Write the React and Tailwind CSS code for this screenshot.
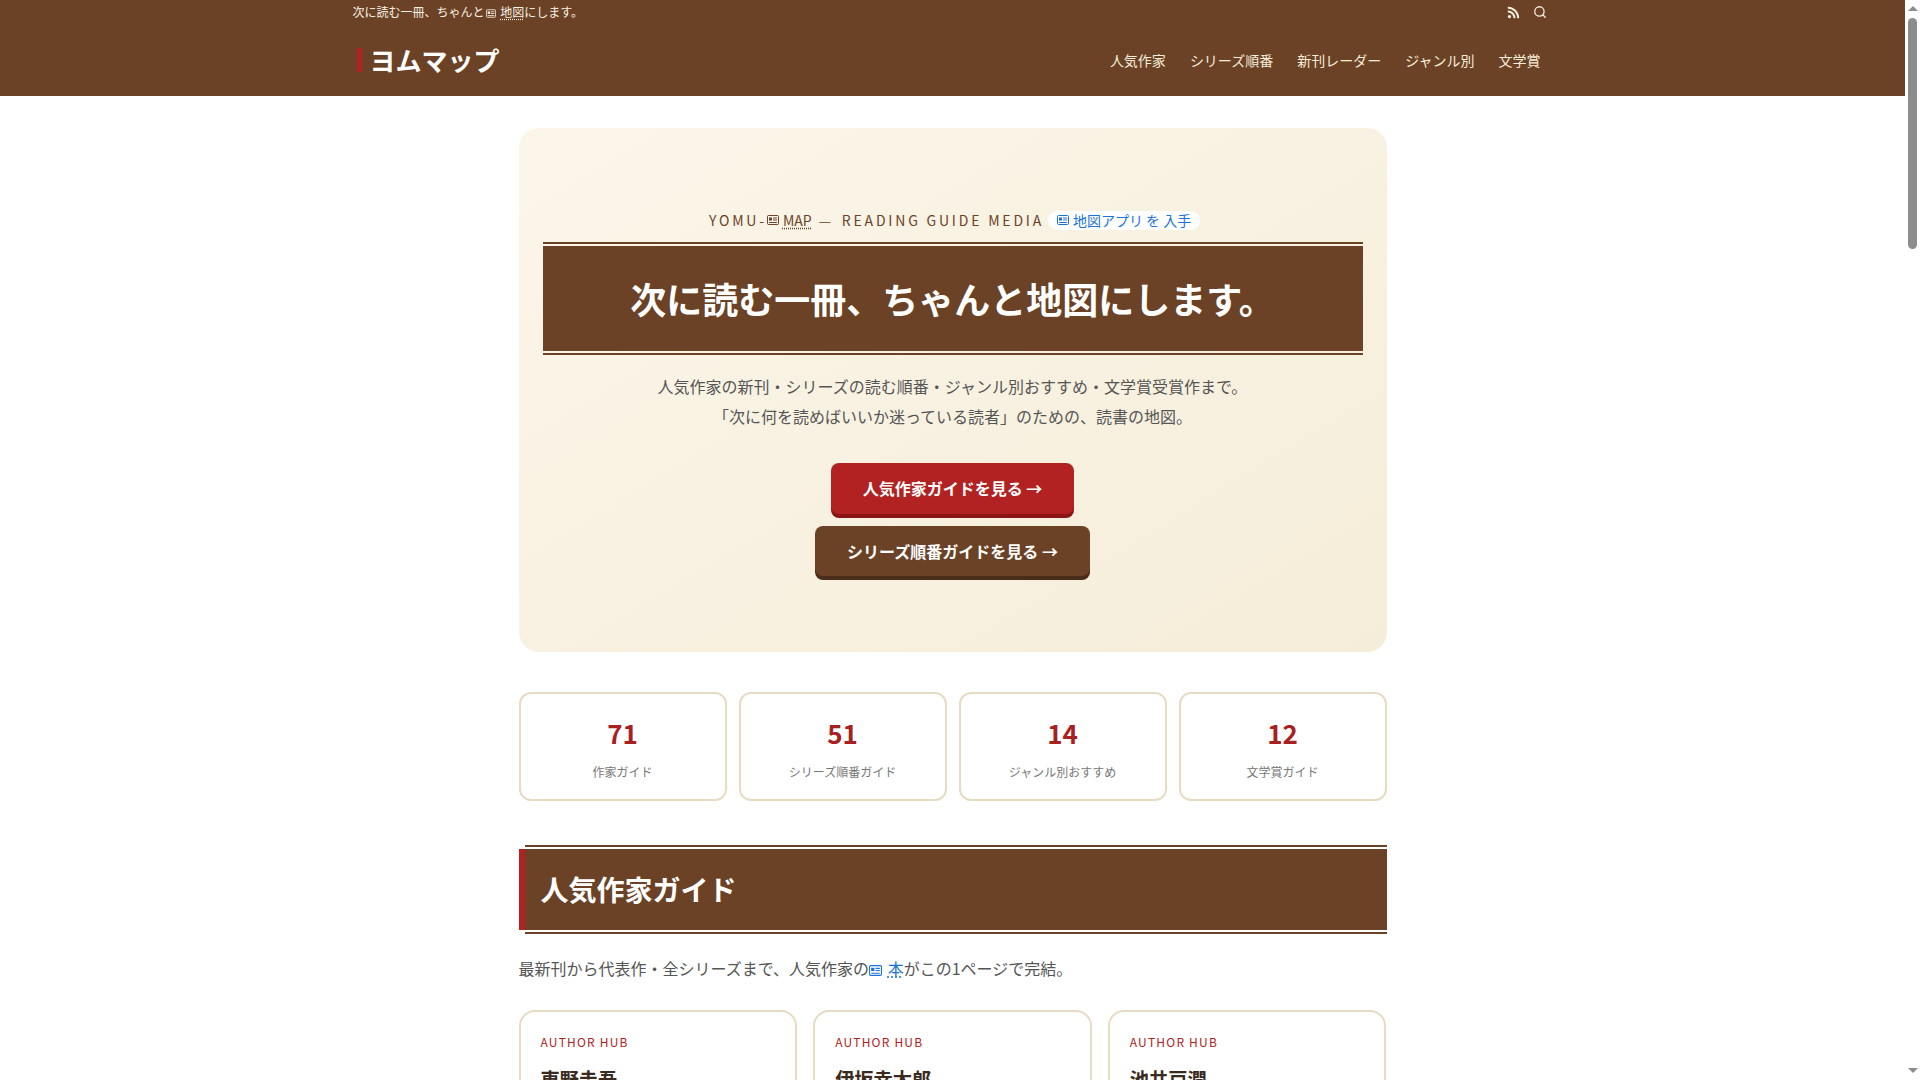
import { FaRss } from "react-icons/fa";

const Ico = ({ c = "currentColor", className = "" }) => (
  <svg viewBox="0 0 12 10" className={`inline-block align-[-0.5px] ${className}`} fill="none" stroke={c} strokeWidth="1">
    <rect x="0.5" y="0.5" width="11" height="9" rx="1" />
    <rect x="2" y="2.5" width="3" height="3" fill={c} stroke="none" />
    <path d="M6 3h4M6 5h4M2 7.5h8" />
  </svg>
);

const Stat = ({ n, l }) => (
  <div className="h-[109px] rounded-xl border-2 border-[#e6dcc3] bg-white flex flex-col items-center pt-[19px]">
    <div className="text-[26px] leading-[40px] font-bold text-[#a82020]">{n}</div>
    <div className="mt-[10px] text-[12px] leading-[18px] text-[#777]">{l}</div>
  </div>
);

const Card = ({ name }) => (
  <div className="h-[280px] rounded-2xl border-2 border-[#e6dcc3] bg-white px-[20px] pt-[20px]">
    <div className="text-[12px] leading-[20px] tracking-[1.2px] text-[#b22222]">AUTHOR HUB</div>
    <div className="mt-[12px] text-[19.2px] leading-[30px] font-bold text-[#3a2a20]">{name}</div>
  </div>
);

const SectionHead = ({ t }) => (
  <div>
    <div className="ml-[6px] h-[2px] bg-[#6b4226]" />
    <h2 className="mt-[2px] h-[81px] border-l-[6px] border-[#b22222] bg-[#6b4226] pl-[16px] flex items-center text-[28px] font-bold text-white">
      <span className="-mt-[2px]">{t}</span>
    </h2>
    <div className="ml-[6px] mt-[2px] h-[2px] bg-[#6b4226]" />
  </div>
);

const authors = ["東野圭吾", "伊坂幸太郎", "池井戸潤"];

export default function App() {
  return (
    <div className="relative h-[1080px] w-[1920px] overflow-hidden bg-white">
      <div className="w-[1905px] text-[#333] font-['Noto_Sans_CJK_JP','Noto_Sans',sans-serif]">
        <header className="h-[96px] bg-[#6b4226] text-white">
          <div className="w-[1200px] mx-auto">
            <div className="h-[24px] flex items-center justify-between">
              <div className="text-[12px] leading-[24px] text-[#f8f1e3]">
                次に読む一冊、ちゃんと<Ico c="#f8f1e3" className="w-[10px] h-[9px] ml-[1px] mr-[2px]" /> <span className="underline decoration-dotted underline-offset-[2px]">地図</span>にします。
              </div>
              <div className="flex items-center gap-[13px] pr-[6px]">
                <FaRss className="w-[13px] h-[13px] text-[#f8f1e3]" />
                <svg viewBox="0 0 24 24" className="w-[14px] h-[14px] -mt-[1px]" fill="none" stroke="#f8f1e3" strokeWidth="2.2" strokeLinecap="round">
                  <circle cx="11" cy="11" r="8" /><path d="m21 21-4.3-4.3" />
                </svg>
              </div>
            </div>
            <div className="h-[72px] flex items-center justify-between">
              <div className="-mt-[1px] ml-[4px] pl-[8px] border-l-[5px] border-[#b22222] text-[26px] leading-[24px] font-bold text-white">ヨムマップ</div>
              <nav className="flex gap-[24px] pr-[12px] text-[14px] text-[#f5ecd8]">
                <span>人気作家</span><span>シリーズ順番</span><span>新刊レーダー</span><span>ジャンル別</span><span>文学賞</span>
              </nav>
            </div>
          </div>
        </header>

        <main className="w-[868px] mx-auto pt-[32px]">
          <section className="h-[524px] rounded-[20px] bg-gradient-to-br from-[#fbf6ea] to-[#f5edd9] px-[24px] pt-[80px] text-center">
            <div className="h-[24px] pl-[4px] flex items-center justify-center text-[14px] tracking-[2.8px] text-[#6b4226]">
              <span>YOMU-</span><Ico c="#6b4226" className="w-[12px] h-[10px] mr-[4px]" /><span className="tracking-normal underline decoration-dotted underline-offset-[2px]">MAP</span>
              <span className="ml-[7px] font-light">—</span>
              <span className="ml-[8px]">READING GUIDE MEDIA</span>
              <span className="ml-[4px] h-[19px] w-[152px] rounded-full bg-white flex items-center justify-center tracking-normal text-[#1a73d8] text-[14px]"><Ico c="#1a73d8" className="w-[12px] h-[10px] mr-[4px]" />地図アプリ を 入手</span>
            </div>
            <div className="mt-[10px] border-y-2 border-[#6b4226] py-[2px]">
              <h1 className="h-[105px] bg-[#6b4226] flex items-center justify-center text-[36px] font-bold text-white"><span className="-mt-[2px]">次に読む一冊、ちゃんと地図にします。</span></h1>
            </div>
            <p className="mt-[16px] text-[16px] leading-[30px] text-[#555]">
              人気作家の新刊・シリーズの読む順番・ジャンル別おすすめ・文学賞受賞作まで。<br />
              「次に何を読めばいいか迷っている読者」のための、読書の地図。
            </p>
            <div className="mt-[32px] flex flex-col items-center gap-[12px]">
              <a className="h-[51px] px-[32px] flex items-center rounded-lg bg-[#b22222] text-white text-[16px] font-bold shadow-[0_4px_0_#8b1414]"><span className="-mt-[2px]">人気作家ガイドを見る →</span></a>
              <a className="h-[50px] px-[32px] flex items-center rounded-lg bg-[#6b4226] text-white text-[16px] font-bold shadow-[0_4px_0_#4a2c1a]">シリーズ順番ガイドを見る →</a>
            </div>
          </section>

          <section className="mt-[40px] grid grid-cols-4 gap-[12px]">
            <Stat n="71" l="作家ガイド" />
            <Stat n="51" l="シリーズ順番ガイド" />
            <Stat n="14" l="ジャンル別おすすめ" />
            <Stat n="12" l="文学賞ガイド" />
          </section>

          <section className="mt-[44px]">
            <SectionHead t="人気作家ガイド" />
            <p className="mt-[19px] text-[16px] leading-[30px] text-[#555]">
              最新刊から代表作・全シリーズまで、人気作家の<Ico c="#1a73d8" className="w-[13px] h-[11px] mr-[2px]" /> <span className="text-[#1a73d8] underline decoration-dotted underline-offset-[2px]">本</span>がこの1ページで完結。
            </p>
            <div className="mt-[27px] grid grid-cols-3 gap-[16px]">
              {authors.map((a) => (
                <Card key={a} name={a} />
              ))}
            </div>
          </section>
        </main>
      </div>

      {/* browser scrollbar */}
      <div className="absolute right-0 top-0 h-full w-[15px] bg-white">
        <div className="absolute left-[3px] top-[6px] w-0 h-0 border-x-[5px] border-x-transparent border-b-[5px] border-b-[#8c8c8c]" />
        <div className="absolute left-[3px] top-[18px] h-[231px] w-[9px] rounded-full bg-[#8c8c8c]" />
        <div className="absolute left-[3px] bottom-[7px] w-0 h-0 border-x-[5px] border-x-transparent border-t-[5px] border-t-[#8c8c8c]" />
      </div>
    </div>
  );
}
